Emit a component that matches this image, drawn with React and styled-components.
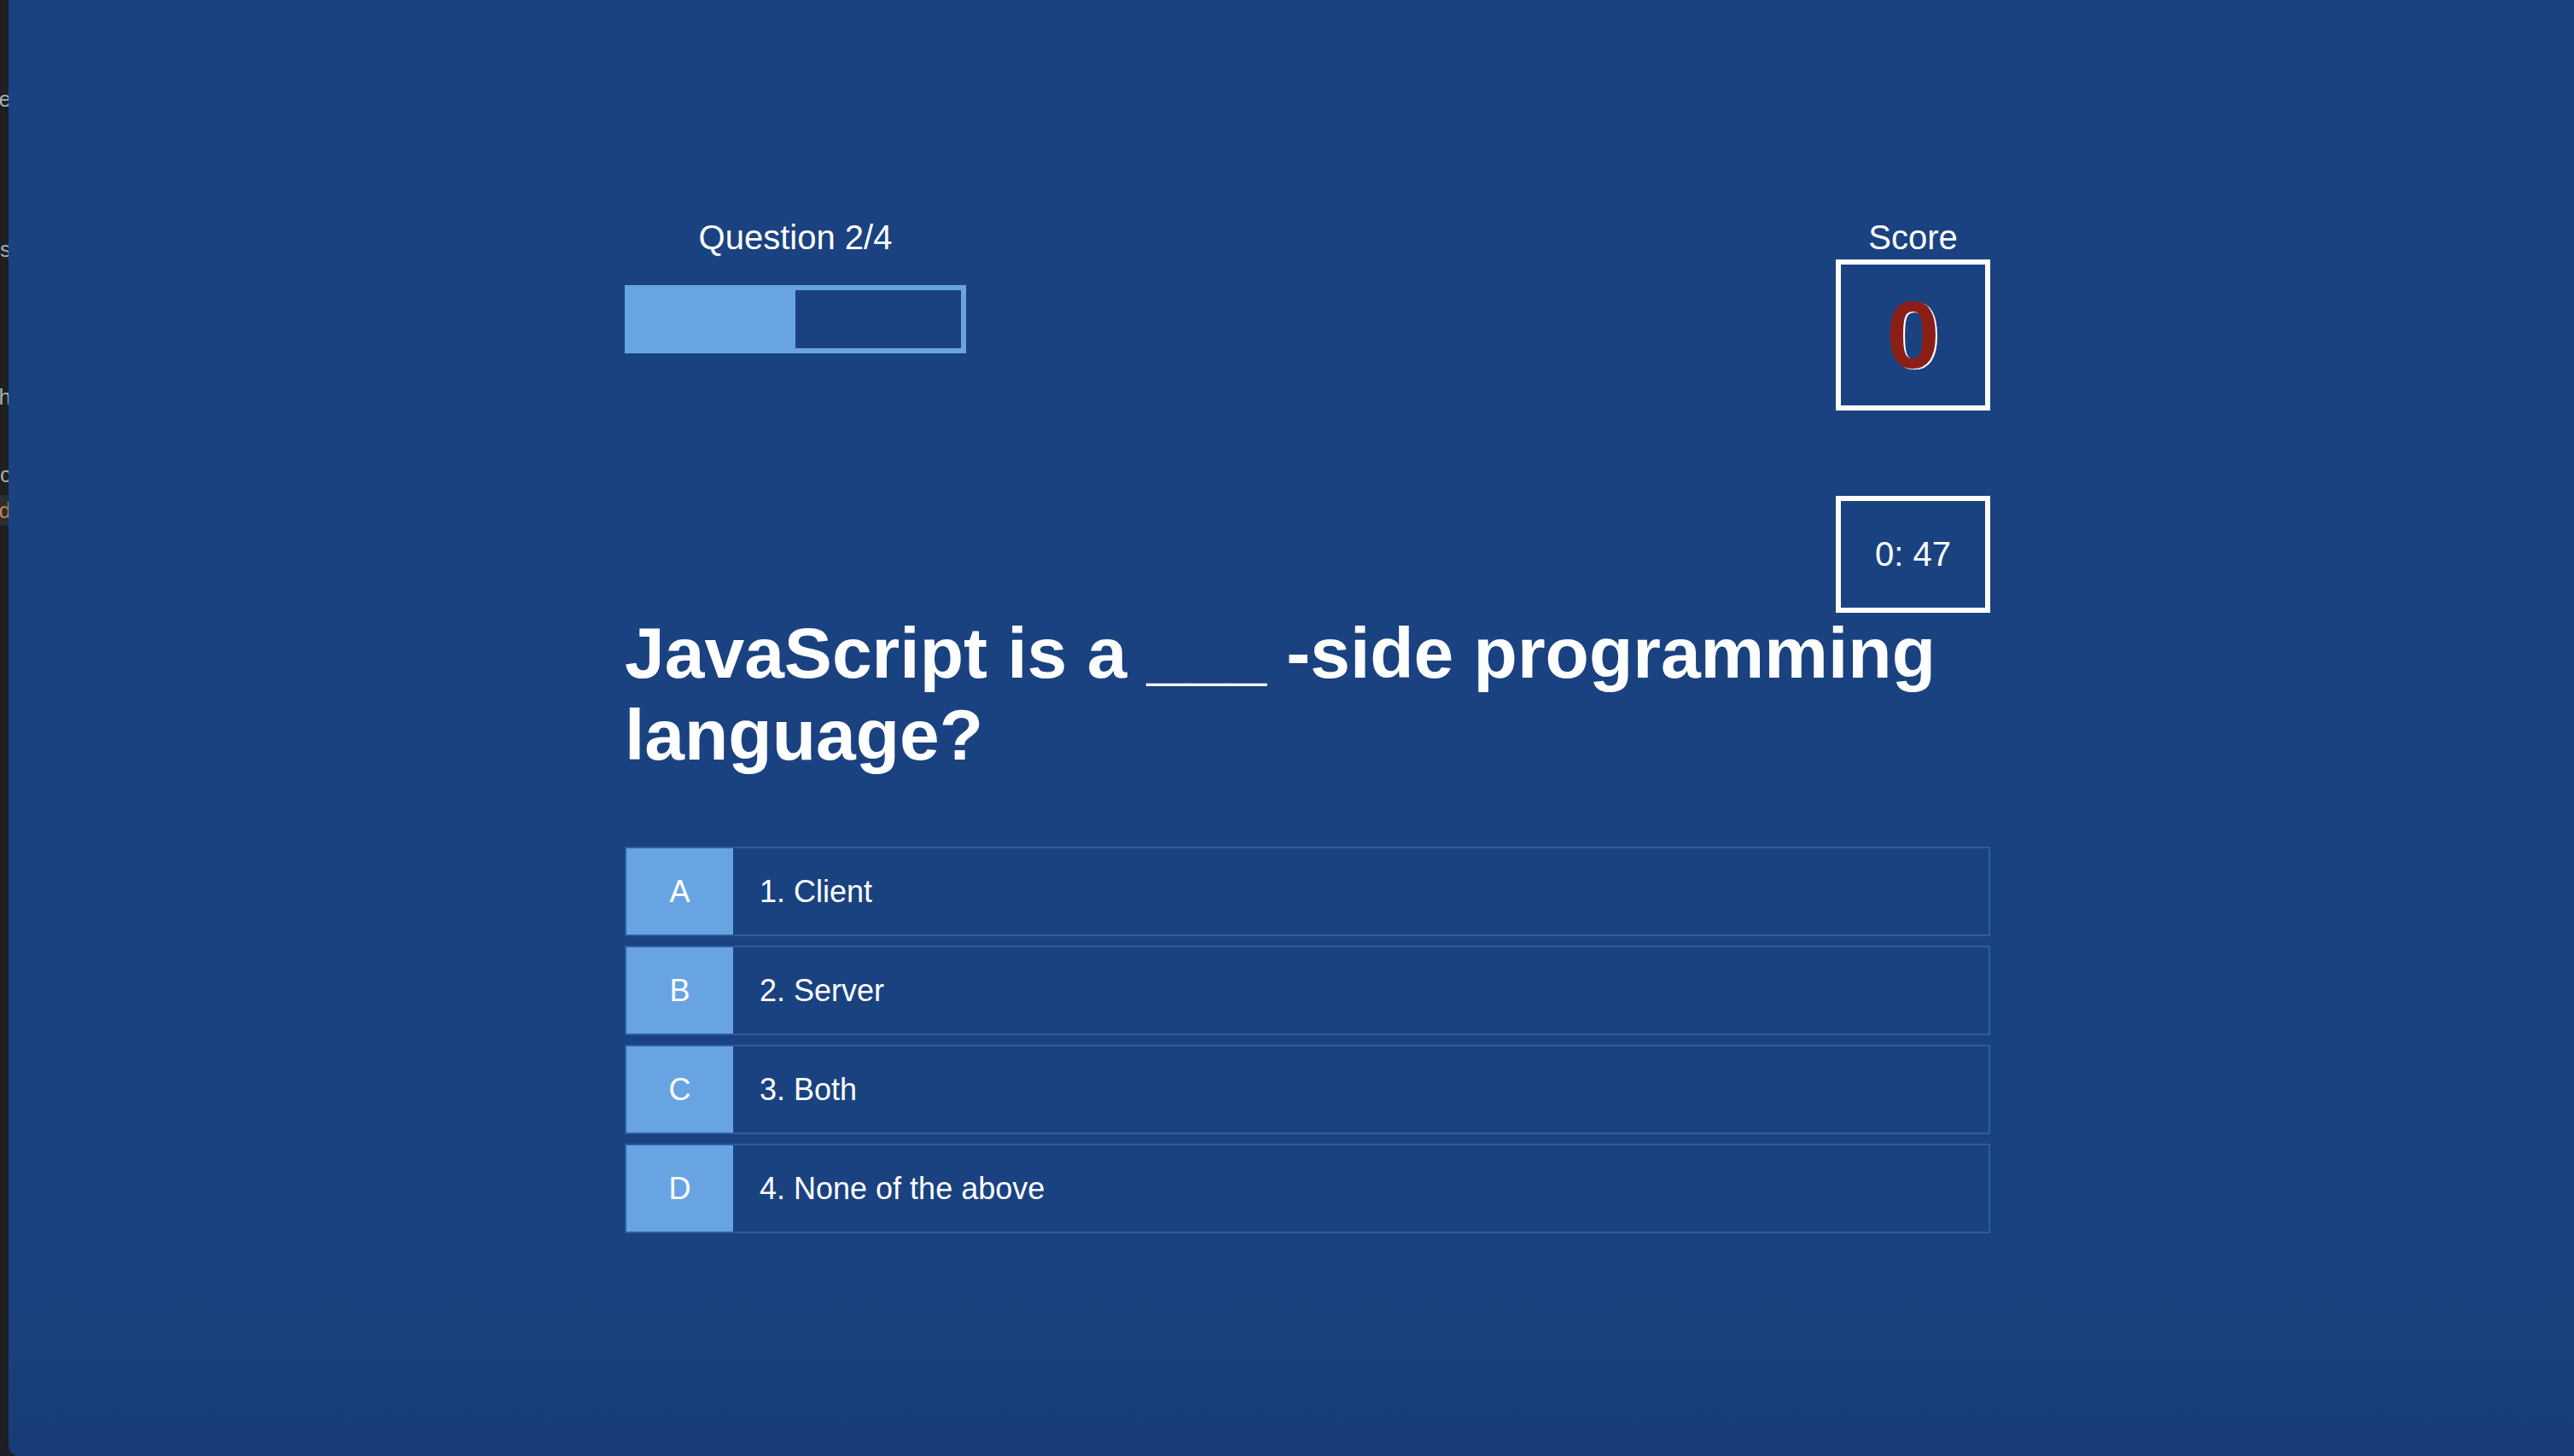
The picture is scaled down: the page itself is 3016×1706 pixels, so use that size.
import styled, { createGlobalStyle } from 'styled-components';

const GlobalStyle = createGlobalStyle`
	html, body {
		margin: 0;
		padding: 0;
		background: #1e1f22;
	}
	* {
		box-sizing: border-box;
	}
`

const OPTIONS = [
	{ letter: 'A', text: '1. Client' },
	{ letter: 'B', text: '2. Server' },
	{ letter: 'C', text: '3. Both' },
	{ letter: 'D', text: '4. None of the above' },
];

// bits of the editor window peeking in on the left
const EDITOR_LINES = [
	{ text: 'e', top: 98 },
	{ text: 's', top: 140 },
	{ text: 'h', top: 137 },
	{ text: 'sc', top: 55 },
	{ text: 'd', top: 6, highlight: true },
];

const App = () => {
	const current = 2;
	const total = 4;

	return (
		<>
			<GlobalStyle />
			<Page>
				<EditorStrip>
					{EDITOR_LINES.map((line, i) => (
						<EditorLine key={i} top={line.top} highlight={line.highlight}>{line.text}</EditorLine>
					))}
				</EditorStrip>

				<Main>
					<Quiz>
						<Header>
							<ProgressColumn>
								<Label>Question {current}/{total}</Label>
								<ProgressBar>
									<ProgressFill style={{ width: `${(current / total) * 100}%` }} />
								</ProgressBar>
							</ProgressColumn>

							<ScoreColumn>
								<Label>Score</Label>
								<ScoreBox>
									<ScoreValue>0</ScoreValue>
								</ScoreBox>
							</ScoreColumn>
						</Header>

						<TimerRow>
							<TimerBox>0: 47</TimerBox>
						</TimerRow>

						<QuestionTitle>JavaScript is a ___ -side programming language?</QuestionTitle>

						<OptionList>
							{OPTIONS.map(option => (
								<OptionRow key={option.letter}>
									<OptionLetter>{option.letter}</OptionLetter>
									<OptionText>{option.text}</OptionText>
								</OptionRow>
							))}
						</OptionList>
					</Quiz>
				</Main>
			</Page>
		</>
	)
}

export default App;

const Page = styled.div`
	display: flex;
	width: 100%;
	height: 1706px;
	background: #1e1f22;
	font-family: "Liberation Sans", Arial, Helvetica, sans-serif;
	overflow: hidden;
`

const EditorStrip = styled.div`
	width: 10px;
	flex-shrink: 0;
	display: flex;
	flex-direction: column;
	direction: rtl;
	overflow: hidden;
`

const EditorLine = styled.div`
	margin-top: ${ props => props.top }px;
	font-size: 26px;
	line-height: 36px;
	color: ${ props => props.highlight ? '#c8844a' : '#a9abb0' };
	background: ${ props => props.highlight ? '#2b2d31' : 'transparent' };
	white-space: nowrap;
	margin-right: -3px;
`

const Main = styled.main`
	flex: 1;
	height: 100%;
	padding: 254px 0 0 38px;
	background: linear-gradient(180deg, #1a4280 0%, #1a4280 88%, #173c76 100%);
	border-bottom-left-radius: 12px;
	color: #ffffff;
`

const Quiz = styled.div`
	width: 1600px;
	margin: 0 auto;
`

const Header = styled.div`
	display: flex;
	justify-content: space-between;
	align-items: flex-start;
`

const ProgressColumn = styled.div`
	width: 400px;
	display: flex;
	flex-direction: column;
	align-items: center;
`

const ScoreColumn = styled.div`
	width: 181px;
	display: flex;
	flex-direction: column;
	align-items: center;
`

const Label = styled.div`
	font-size: 40px;
	line-height: 48px;
	margin-bottom: 2px;
	white-space: nowrap;
`

const ProgressBar = styled.div`
	width: 400px;
	height: 80px;
	margin-top: 30px;
	border: 6px solid #68a4e2;
	display: flex;
`

const ProgressFill = styled.div`
	height: 100%;
	background: #68a4e2;
`

const ScoreBox = styled.div`
	width: 181px;
	height: 177px;
	border: 6px solid #ffffff;
	display: flex;
	align-items: center;
	justify-content: center;
`

const ScoreValue = styled.span`
	font-size: 112px;
	font-weight: 700;
	line-height: 1;
	color: #8b1e16;
	text-shadow: 2px 1px 0 #ffffff;
`

const TimerRow = styled.div`
	display: flex;
	justify-content: flex-end;
	margin-top: 100px;
`

const TimerBox = styled.div`
	width: 181px;
	height: 137px;
	border: 6px solid #ffffff;
	display: flex;
	align-items: center;
	justify-content: center;
	font-size: 40px;
`

const QuestionTitle = styled.h1`
	margin: -1px 0 83px;
	font-size: 84px;
	line-height: 96px;
	font-weight: 700;
`

const OptionList = styled.div`
	display: flex;
	flex-direction: column;
	gap: 11px;
`

const OptionRow = styled.div`
	display: flex;
	height: 105px;
	border: 2px solid #2c5e9f;
	cursor: pointer;
`

const OptionLetter = styled.div`
	width: 125px;
	flex-shrink: 0;
	background: #68a4e2;
	display: flex;
	align-items: center;
	justify-content: center;
	font-size: 36px;
`

const OptionText = styled.div`
	display: flex;
	align-items: center;
	padding-left: 31px;
	font-size: 36px;
`
